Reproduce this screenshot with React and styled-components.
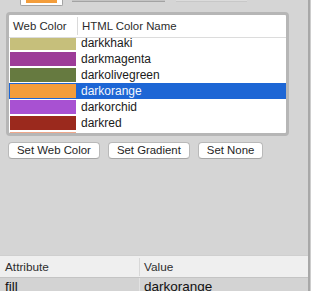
import React from 'react';
import styled, { createGlobalStyle } from 'styled-components';

const Global = createGlobalStyle`
  html, body { margin: 0; padding: 0; background: #d5d5d5; }
  body { font-family: "Liberation Sans", Arial, sans-serif; }
`;

const Page = styled.div`
  width: 311px;
  height: 291px;
  overflow: hidden;
  display: flex;
  background: #d5d5d5;
`;

const Main = styled.div`
  width: 308px;
  flex: none;
  display: flex;
  flex-direction: column;
`;

const Splitter = styled.div`
  width: 2px;
  flex: none;
  background: #a8a8a8;
`;

const Beyond = styled.div`
  flex: 1;
  background: #cdcdcd;
`;

const TopStrip = styled.div`
  height: 6px;
  flex: none;
  display: flex;
  align-items: flex-start;
  padding-left: 20px;
`;

const Well = styled.div`
  width: 43px;
  height: 6px;
  box-sizing: border-box;
  border: 1px solid #a3a3a3;
  border-top: none;
  border-radius: 0 0 2px 2px;
  background: #fff;
  padding: 0 5px 2px;
  display: flex;
`;

const WellColor = styled.div`
  flex: 1;
  background: ${(p) => p.$c};
`;

const TabStub = styled.div`
  margin-left: ${(p) => p.$ml}px;
  width: ${(p) => p.$w}px;
  height: 2px;
  box-sizing: border-box;
  background: ${(p) => p.$bg};
  border-bottom: 1px solid ${(p) => p.$line};
`;

const Panel = styled.div`
  margin: 6px 0 0 6px;
  width: 283px;
  height: 124px;
  box-sizing: border-box;
  border: 3px solid #b6b6b6;
  border-radius: 4px;
  background: #fff;
  overflow: hidden;
  display: flex;
  flex-direction: column;
  flex: none;
`;

const HeadRow = styled.div`
  height: 23px;
  flex: none;
  box-sizing: border-box;
  border-bottom: 1px solid #dcdcdc;
  display: flex;
  align-items: center;
  font-size: 11.4px;
  color: #2b2b2b;
`;

const HeadCell = styled.div`
  width: ${(p) => (p.$w ? `${p.$w}px` : 'auto')};
  flex: ${(p) => (p.$w ? 'none' : '1')};
  box-sizing: border-box;
  padding-left: 4px;
  height: 18px;
  line-height: 18px;
  white-space: nowrap;
  border-right: ${(p) => (p.$divider ? '1px solid #dadada' : 'none')};
`;

const Body = styled.div`
  flex: 1;
  overflow: hidden;
`;

const List = styled.div`
  margin-top: -3px;
`;

const Row = styled.div`
  height: 16px;
  display: flex;
  align-items: center;
  background: ${(p) => (p.$sel ? '#1d66d5' : 'transparent')};
  color: ${(p) => (p.$sel ? '#f4f7fc' : '#1a1a1a')};
  font-size: 12px;
`;

const Swatch = styled.div`
  width: 66px;
  height: 14px;
  margin-left: 1px;
  flex: none;
  background: ${(p) => p.$c};
`;

const Name = styled.div`
  padding-left: 5px;
  line-height: 16px;
  white-space: nowrap;
`;

const ButtonBar = styled.div`
  display: flex;
  gap: 8px;
  margin: 6px 0 0 8px;
  flex: none;
`;

const Button = styled.button`
  height: 17px;
  box-sizing: border-box;
  padding: 0 8px;
  margin: 0;
  border: 1px solid #b9b9b9;
  border-bottom-color: #a6a6a6;
  border-radius: 4px;
  background: #fff;
  font-family: "Liberation Sans", Arial, sans-serif;
  font-size: 11.4px;
  line-height: 15px;
  color: #1e1e1e;
  white-space: nowrap;
`;

const AttrTable = styled.div`
  margin-top: 96px;
  flex: none;
`;

const AttrHead = styled.div`
  height: 23px;
  box-sizing: border-box;
  background: #efefef;
  border-top: 1px solid #cfcfcf;
  border-bottom: 1px solid #c4c4c4;
  display: flex;
  align-items: center;
  font-size: 11.8px;
  color: #2e2e2e;
`;

const AttrHeadCell = styled.div`
  width: ${(p) => (p.$w ? `${p.$w}px` : 'auto')};
  flex: ${(p) => (p.$w ? 'none' : '1')};
  box-sizing: border-box;
  padding-left: ${(p) => p.$pl}px;
  height: 18px;
  line-height: 18px;
  border-right: ${(p) => (p.$divider ? '1px solid #d8d8d8' : 'none')};
`;

const AttrRow = styled.div`
  height: 18px;
  display: flex;
  background: #d3d3d3;
  font-size: 13.5px;
  color: #111;
`;

const AttrCell = styled.div`
  width: ${(p) => (p.$w ? `${p.$w}px` : 'auto')};
  flex: ${(p) => (p.$w ? 'none' : '1')};
  box-sizing: border-box;
  padding-left: ${(p) => p.$pl}px;
  line-height: 18px;
  border-right: ${(p) => (p.$divider ? '1px solid #e2e2e2' : 'none')};
`;

const colors = [
  { name: 'darkkhaki', c: '#c6bf7b' },
  { name: 'darkmagenta', c: '#9d3c98' },
  { name: 'darkolivegreen', c: '#667a40' },
  { name: 'darkorange', c: '#f39d3b', sel: true },
  { name: 'darkorchid', c: '#a851d2' },
  { name: 'darkred', c: '#9b291d' },
  { name: 'darksalmon', c: '#efa78a' },
  { name: 'darkseagreen', c: '#94bb8d' },
];

export default function App() {
  return (
    <>
      <Global />
      <Page>
        <Main>
          <TopStrip>
            <Well>
              <WellColor $c="#f39d3b" />
            </Well>
            <TabStub $ml={9} $w={93} $bg="#c4c4c4" $line="#a3a3a3" />
            <TabStub $ml={11} $w={71} $bg="#dcdcdc" $line="#c8c8c8" />
          </TopStrip>
          <Panel>
            <HeadRow>
              <HeadCell $w={69} $divider>Web Color</HeadCell>
              <HeadCell>HTML Color Name</HeadCell>
            </HeadRow>
            <Body>
              <List>
                {colors.map((it) => (
                  <Row key={it.name} $sel={it.sel}>
                    <Swatch $c={it.c} />
                    <Name>{it.name}</Name>
                  </Row>
                ))}
              </List>
            </Body>
          </Panel>
          <ButtonBar>
            <Button>Set Web Color</Button>
            <Button>Set Gradient</Button>
            <Button>Set None</Button>
          </ButtonBar>
          <AttrTable>
            <AttrHead>
              <AttrHeadCell $w={140} $pl={5} $divider>Attribute</AttrHeadCell>
              <AttrHeadCell $pl={4}>Value</AttrHeadCell>
            </AttrHead>
            <AttrRow>
              <AttrCell $w={140} $pl={5} $divider>fill</AttrCell>
              <AttrCell $pl={4}>darkorange</AttrCell>
            </AttrRow>
          </AttrTable>
        </Main>
        <Splitter />
        <Beyond />
      </Page>
    </>
  );
}
